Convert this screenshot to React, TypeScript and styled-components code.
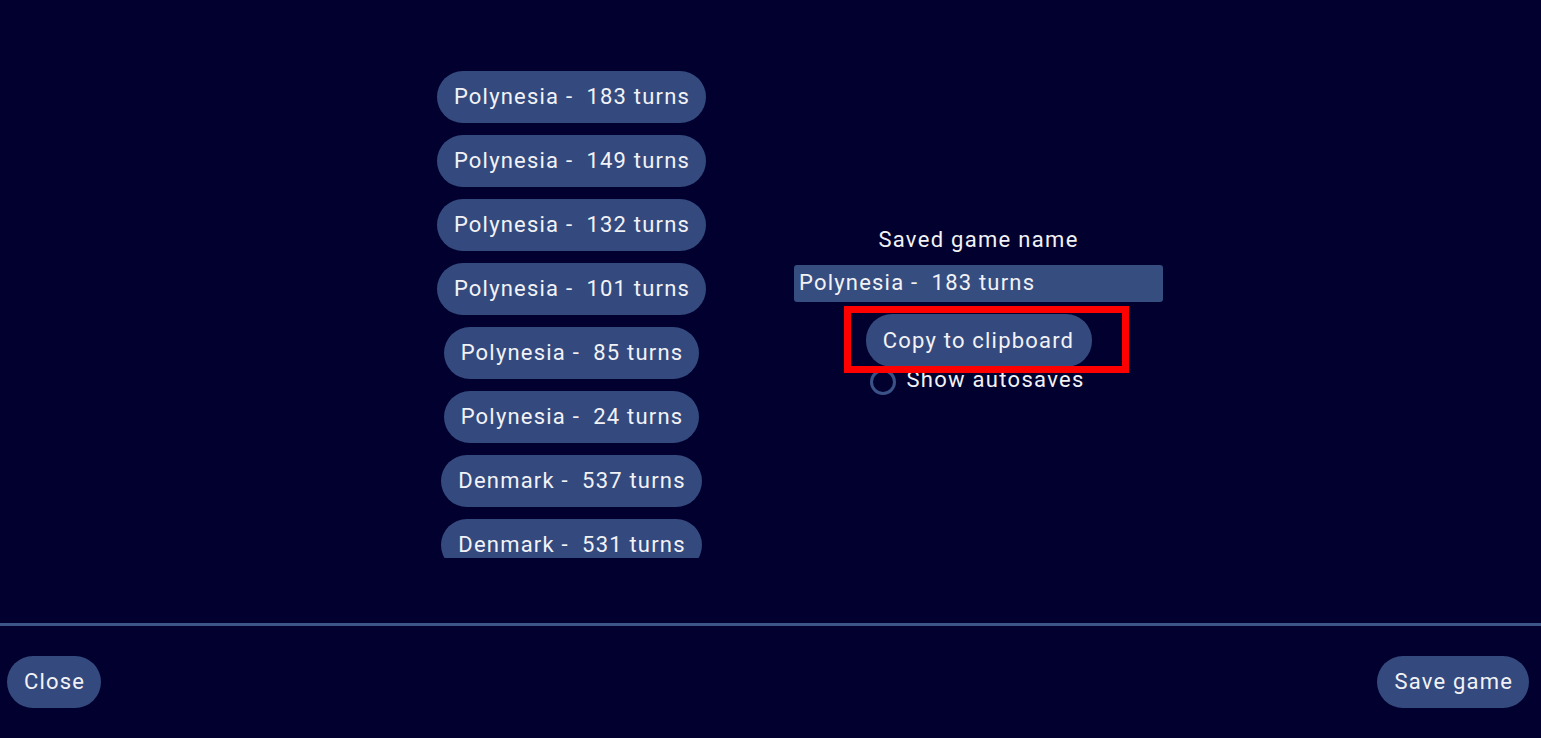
import React from "react";
import styled, { createGlobalStyle } from "styled-components";

const Global = createGlobalStyle`
  html, body { margin: 0; padding: 0; background: #02002e; }
  body { font-family: Roboto, "Noto Sans", sans-serif; color: #f2f2f6; }
  * { box-sizing: border-box; }
`;

const Screen = styled.div`
  width: 1541px;
  height: 738px;
  display: flex;
  flex-direction: column;
  background: #02002e;
  overflow: hidden;
`;

const Main = styled.div`
  height: 623px;
  display: flex;
  align-items: center;
  padding-left: 431px;
  gap: 82px;
`;

const SaveList = styled.div`
  width: 281px;
  height: 492px;
  overflow: hidden;
  display: flex;
  flex-direction: column;
  align-items: center;
  gap: 12px;
  padding-top: 5px;
`;

const PillButton = styled.button`
  flex-shrink: 0;
  height: 52px;
  padding: 0 16px 0 17px;
  border: none;
  border-radius: 26px;
  background: #344a7e;
  color: #f2f2f6;
  font-family: Roboto, "Noto Sans", sans-serif;
  font-size: 22px;
  letter-spacing: 1.2px;
  line-height: 52px;
  white-space: pre;
  cursor: pointer;
`;

const Side = styled.div`
  width: 369px;
  display: flex;
  flex-direction: column;
  align-items: center;
`;

const Label = styled.div`
  font-size: 22px;
  letter-spacing: 1.3px;
  line-height: 26px;
  height: 26px;
  margin-top: -2px;
`;

const NameField = styled.div`
  margin-top: 12px;
  width: 369px;
  height: 37px;
  background: #364d80;
  border-radius: 3px;
  font-size: 22px;
  letter-spacing: 1.2px;
  line-height: 35px;
  padding-left: 5px;
  white-space: pre;
`;

const Highlight = styled.div`
  position: relative;
  margin-top: 12px;
  display: flex;

  &::after {
    content: "";
    position: absolute;
    left: -22px;
    right: -37px;
    top: -8px;
    bottom: -6px;
    border: 7px solid #ff0000;
    pointer-events: none;
  }
`;

const CopyButton = styled(PillButton)`
  height: 53px;
  width: 226px;
  padding: 0;
  line-height: 53px;
`;

const RadioRow = styled.div`
  display: flex;
  align-items: center;
  gap: 10px;
  height: 28px;
  margin-top: -1px;
  margin-left: -2px;
  font-size: 22px;
  letter-spacing: 1.3px;
  line-height: 26px;
`;

const RadioCircle = styled.span`
  width: 26px;
  height: 26px;
  border-radius: 50%;
  border: 3px solid #3a5288;
  margin-top: 4px;
`;

const Separator = styled.div`
  height: 3px;
  background: #3d5689;
`;

const Footer = styled.div`
  flex: 1;
  display: flex;
  align-items: center;
  justify-content: space-between;
  padding: 0 12px 0 7px;
`;

const saves = [
  "Polynesia -  183 turns",
  "Polynesia -  149 turns",
  "Polynesia -  132 turns",
  "Polynesia -  101 turns",
  "Polynesia -  85 turns",
  "Polynesia -  24 turns",
  "Denmark -  537 turns",
  "Denmark -  531 turns",
];

export default function App() {
  return (
    <>
      <Global />
      <Screen>
        <Main>
          <SaveList>
            {saves.map((s) => (
              <PillButton key={s}>{s}</PillButton>
            ))}
          </SaveList>
          <Side>
            <Label>Saved game name</Label>
            <NameField>Polynesia -  183 turns</NameField>
            <Highlight>
              <CopyButton>Copy to clipboard</CopyButton>
            </Highlight>
            <RadioRow>
              <RadioCircle />
              <span>Show autosaves</span>
            </RadioRow>
          </Side>
        </Main>
        <Separator />
        <Footer>
          <PillButton>Close</PillButton>
          <PillButton>Save game</PillButton>
        </Footer>
      </Screen>
    </>
  );
}
